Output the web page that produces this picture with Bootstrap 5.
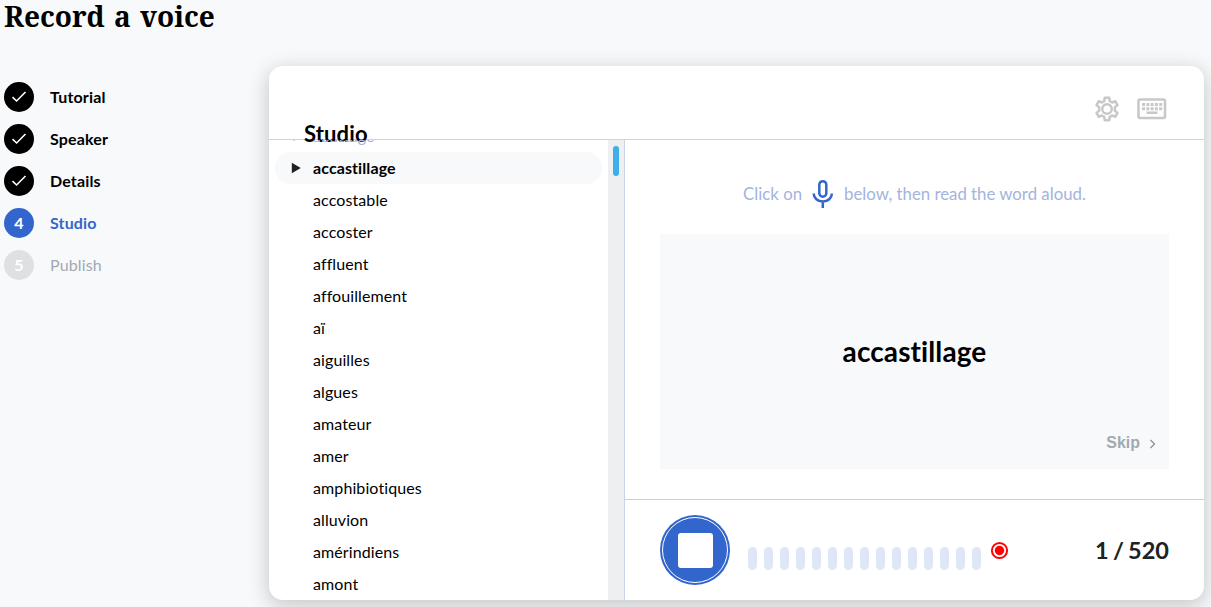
<!DOCTYPE html>
<html lang="en">
<head>
<meta charset="utf-8">
<meta name="viewport" content="width=device-width, initial-scale=1">
<title>Record a voice</title>
<link href="https://cdn.jsdelivr.net/npm/bootstrap@5.3.0/dist/css/bootstrap.min.css" rel="stylesheet">
<style>
  body { background:#f8f9fb; font-family:Lato,"Liberation Sans",sans-serif; color:#000; height:607px; overflow:hidden; font-variant-ligatures:none; }
  .page-title { font:700 28px/32px "Noto Serif","Liberation Serif",serif; height:66px; padding:0 0 0 4px; margin:0; word-spacing:2px; }
  .steps { width:269px; padding:16px 0 0 4px; gap:12px; }
  .step { height:30px; gap:16px; font-size:16px; font-weight:700; letter-spacing:.15px; }
  .step-dot { width:30px; height:30px; background:#000; color:#fff; }
  .step-now { color:#36c; } .step-now .step-dot { background:#36c; }
  .step-next { color:#a2a9b1; font-weight:400; } .step-next .step-dot { background:#dee1e4; font-weight:700; }
  .studio { width:935px; height:534px; border-radius:14px; background:#fff; box-shadow:0 5px 20px 2px rgba(0,0,0,.19); overflow:hidden; }
  .studio-head { height:74px; border-bottom:1px solid #d2d3d6; padding:28px 37px 0 35px; }
  .studio-head h2 { font-size:22px; line-height:26px; font-weight:700; margin:27px 0 0; letter-spacing:.15px; }
  .head-icons { gap:15px; height:30px; }
  .words { width:339px; overflow:hidden; }
  .words ul { margin:-20px 6px 0; }
  .words li { height:32px; line-height:32px; font-size:16px; padding-left:38px; border-radius:16px; position:relative; white-space:nowrap; letter-spacing:.1px; }
  .words .done { color:#a3b4dd; }
  .words .current { background:#f8f9fb; font-weight:700; }
  .words li svg { position:absolute; left:16px; top:10px; }
  .track { width:17px; background:#edeff1; border-right:1px solid #c8d5e8; padding:6px 5px 0; }
  .thumb { width:6px; height:30px; border-radius:3px; background:#3daee9; }
  .recorder { width:579px; }
  .hint { height:94px; padding-top:14px; font-size:16.8px; color:#a3b4dd; }
  .hint span { margin-bottom:1px; }
  .prompt { height:235px; margin:0 35px 30px; background:#f8f9fb; }
  .prompt strong { font-size:28px; line-height:34px; margin-top:100px; letter-spacing:.1px; }
  .skip { font:700 16px/20px "Liberation Sans",sans-serif; color:#a2a9b1; padding:0 12px; margin-top:65px; gap:8px; letter-spacing:0; }
  .skip svg { margin-top:2px; }
  .controls { height:101px; border-top:1px solid #c8d0e6; padding:0 35px; }
  .stop { width:70px; height:70px; background:#36c; border:0; padding:2px; }
  .stop span { width:66px; height:66px; border:1px solid #fff; }
  .stop i { width:35px; height:35px; background:#fff; border-radius:3px; }
  .meter { gap:7px; margin:17px 0 0 18px; }
  .meter span { width:9px; height:23px; border-radius:4.5px; background:#dfe6f6; }
  .count { font-size:23.5px; font-weight:700; color:#202122; word-spacing:-1.5px; padding-top:1px; }
</style>
</head>
<body>
<h1 class="page-title">Record a voice</h1>
<main class="d-flex">
  <nav class="steps d-flex flex-column">
    <div class="step d-flex align-items-center"><span class="step-dot rounded-circle d-flex align-items-center justify-content-center"><svg width="16" height="14" viewBox="0 0 16 14" fill="none" stroke="#fff" stroke-width="1.6"><path d="M1.5 7.2 5.6 11 14.5 2"/></svg></span>Tutorial</div>
    <div class="step d-flex align-items-center"><span class="step-dot rounded-circle d-flex align-items-center justify-content-center"><svg width="16" height="14" viewBox="0 0 16 14" fill="none" stroke="#fff" stroke-width="1.6"><path d="M1.5 7.2 5.6 11 14.5 2"/></svg></span>Speaker</div>
    <div class="step d-flex align-items-center"><span class="step-dot rounded-circle d-flex align-items-center justify-content-center"><svg width="16" height="14" viewBox="0 0 16 14" fill="none" stroke="#fff" stroke-width="1.6"><path d="M1.5 7.2 5.6 11 14.5 2"/></svg></span>Details</div>
    <div class="step step-now d-flex align-items-center"><span class="step-dot rounded-circle d-flex align-items-center justify-content-center">4</span>Studio</div>
    <div class="step step-next d-flex align-items-center"><span class="step-dot rounded-circle d-flex align-items-center justify-content-center">5</span>Publish</div>
  </nav>
  <section class="studio d-flex flex-column">
    <header class="studio-head d-flex justify-content-between flex-shrink-0">
      <h2>Studio</h2>
      <div class="head-icons d-flex align-items-center">
        <svg width="30" height="30" viewBox="0 0 24 24" fill="none" stroke="#c8c8c8" stroke-width="2" stroke-linejoin="round"><path d="M10.2 3h3.6l.4 2.7 1.9 1.1 2.5-1 1.8 3.1-2.1 1.7v2.8l2.1 1.7-1.8 3.1-2.5-1-1.9 1.1-.4 2.7h-3.6l-.4-2.7-1.9-1.1-2.5 1-1.8-3.1 2.1-1.7v-2.8L3.6 8.900l1.800-3.100 2.500 1 1.900-1.100z"/><circle cx="12" cy="12" r="3.800"/></svg>
        <svg width="30" height="22" viewBox="0 0 30 22" fill="#c8c8c8"><rect x="1.500" y="1.500" width="26.500" height="18.500" rx="1.500" fill="none" stroke="#c8c8c8" stroke-width="2.600"/><path d="M5 5h3v3H5zM9.300 5h3v3h-3zM13.600 5h3v3h-3zM17.900 5h3v3h-3zM22.200 5h3v3h-3zM5 9.200h3v3H5zM9.300 9.200h3v3h-3zM13.600 9.200h3v3h-3zM17.900 9.200h3v3h-3zM22.200 9.200h3v3h-3zM9.500 13.500h11v2.500h-11z"/></svg>
      </div>
    </header>
    <div class="d-flex flex-grow-1" style="min-height:0">
      <div class="words">
        <ul class="list-unstyled">
          <li class="done"><svg width="13" height="13" viewBox="0 0 13 13" fill="none" stroke="#a3b4dd" stroke-width="1.500"><path d="M-1 6l4 4 7-8"/></svg>abattage</li>
          <li class="current"><svg width="10" height="12" viewBox="0 0 10 12" fill="#202122"><path d="M.8.8 9.800 6 .8 11.200z"/></svg>accastillage</li>
          <li>accostable</li><li>accoster</li><li>affluent</li><li>affouillement</li><li>aï</li><li>aiguilles</li><li>algues</li><li>amateur</li><li>amer</li><li>amphibiotiques</li><li>alluvion</li><li>amérindiens</li><li>amont</li>
        </ul>
      </div>
      <div class="track"><div class="thumb"></div></div>
      <div class="recorder d-flex flex-column">
        <div class="hint d-flex align-items-center justify-content-center"><span>Click on</span>
          <svg class="ms-2" width="26" height="30" viewBox="0 0 26 30" fill="none" stroke="#36c" stroke-width="2.500"><rect x="9.300" y="2.200" width="7" height="15.500" rx="3.500"/><path d="M3.700 14.500a9 8 0 0 0 18.200 0M12.800 22.500V29"/></svg>
          <span class="ms-2">below, then read the word aloud.</span></div>
        <div class="prompt d-flex flex-column align-items-center"><strong>accastillage</strong>
          <div class="skip d-flex align-items-center align-self-end">Skip <svg width="9" height="10" viewBox="0 0 9 10" fill="none" stroke="#8a8d91" stroke-width="1.200"><path d="M2.500 1 6.500 5 2.500 9"/></svg></div></div>
        <footer class="controls d-flex align-items-center">
          <button class="stop rounded-circle" aria-label="Stop"><span class="rounded-circle d-flex align-items-center justify-content-center"><i></i></span></button>
          <div class="meter d-flex"><span></span><span></span><span></span><span></span><span></span><span></span><span></span><span></span><span></span><span></span><span></span><span></span><span></span><span></span><span></span></div>
          <svg class="ms-2" width="20" height="20" viewBox="0 0 20 20"><circle cx="10.500" cy="10.500" r="7.600" fill="#fff" stroke="red" stroke-width="2"/><circle cx="10.500" cy="10.500" r="4.700" fill="red"/></svg>
          <span class="count ms-auto">1 / 520</span>
        </footer>
      </div>
    </div>
  </section>
</main>
<script src="https://cdn.jsdelivr.net/npm/bootstrap@5.3.0/dist/js/bootstrap.bundle.min.js"></script>
</body>
</html>
